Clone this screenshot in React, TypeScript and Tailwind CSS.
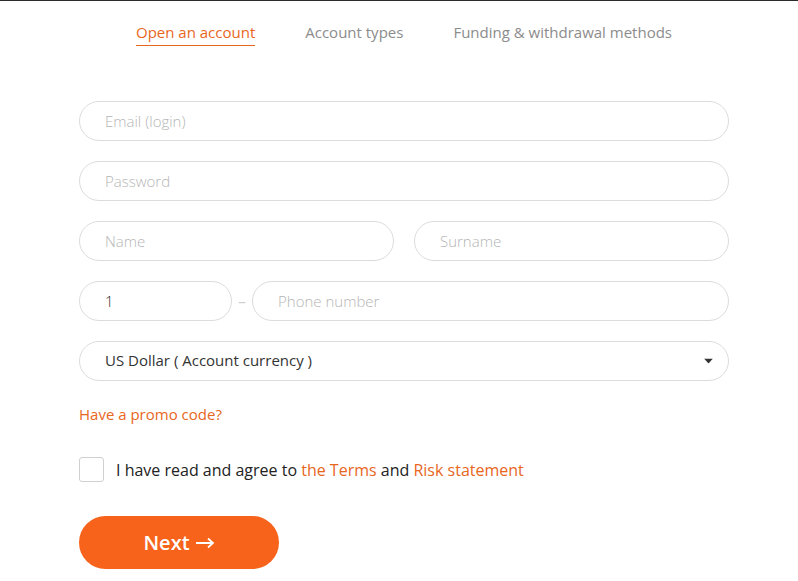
import { useState } from "react";

const TABS = ["Open an account", "Account types", "Funding & withdrawal methods"];

const field =
  "h-10 min-w-0 rounded-full border border-[#dcdcdc] bg-white pl-[25px] pr-5 text-[15px] font-light text-[#333] outline-none placeholder:text-[#b5b5b5]";

export default function App() {
  const [agree, setAgree] = useState(false);

  return (
    <div className="min-h-screen border-t border-[#2b2b2b] bg-white" style={{ fontFamily: '"Open Sans", sans-serif' }}>
      <div className="ml-[79px] w-[650px]">
        {/* Tabs */}
        <nav className="flex justify-center gap-[50px] pt-[20px] text-[15px]">
          {TABS.map((t, i) => (
            <span
              key={t}
              className={
                i === 0
                  ? "border-b border-[#e8661d] pb-[1px] text-[#e8661d]"
                  : "pb-[1px] text-[#8c8c8c]"
              }
            >
              {t}
            </span>
          ))}
        </nav>

        {/* Form */}
        <form className="mt-[55px] flex flex-col gap-5">
          <input className={`${field} w-full`} placeholder="Email (login)" />
          <input className={`${field} w-full`} type="password" placeholder="Password" />
          <div className="flex gap-5">
            <input className={`${field} flex-1`} placeholder="Name" />
            <input className={`${field} flex-1`} placeholder="Surname" />
          </div>
          <div className="flex items-center">
            <input className={`${field} w-[153px] shrink-0`} defaultValue="1" />
            <span className="w-5 text-center text-[#cfcfcf]">–</span>
            <input className={`${field} flex-1`} placeholder="Phone number" />
          </div>
          <div className="relative">
            <select className={`${field} w-full appearance-none font-normal text-[#222]`}>
              <option>US Dollar ( Account currency )</option>
            </select>
            <span className="pointer-events-none absolute right-[16px] top-1/2 -translate-y-1/2">
              <svg width="9" height="5" viewBox="0 0 9 5">
                <path d="M0 0h9L4.5 5z" fill="#333" />
              </svg>
            </span>
          </div>
        </form>

        <a className="mt-[22px] block text-[15px] text-[#e8661d]">Have a promo code?</a>

        <label className="mt-[32px] flex items-center gap-3 text-[16px] text-[#222]">
          <span
            onClick={() => setAgree(!agree)}
            className="h-[25px] w-[25px] shrink-0 rounded-[3px] border border-[#d0d0d0] bg-white"
          >
            {agree && <span className="block h-full w-full rounded-[2px] bg-[#f7631b]" />}
          </span>
          <span>
            I have read and agree to <span className="text-[#e8661d]">the Terms</span> and{" "}
            <span className="text-[#e8661d]">Risk statement</span>
          </span>
        </label>

        <button className="mt-[34px] flex h-[53px] w-[200px] items-center justify-center gap-[5px] rounded-full bg-[#f7631b] text-[20px] font-semibold text-white">
          Next
          <svg width="20" height="12" viewBox="0 0 20 12" className="mt-[1px]">
            <path d="M1 6h17M13 1.5L18 6l-5 4.5" fill="none" stroke="#fff" strokeWidth="1.8" />
          </svg>
        </button>
      </div>
    </div>
  );
}
